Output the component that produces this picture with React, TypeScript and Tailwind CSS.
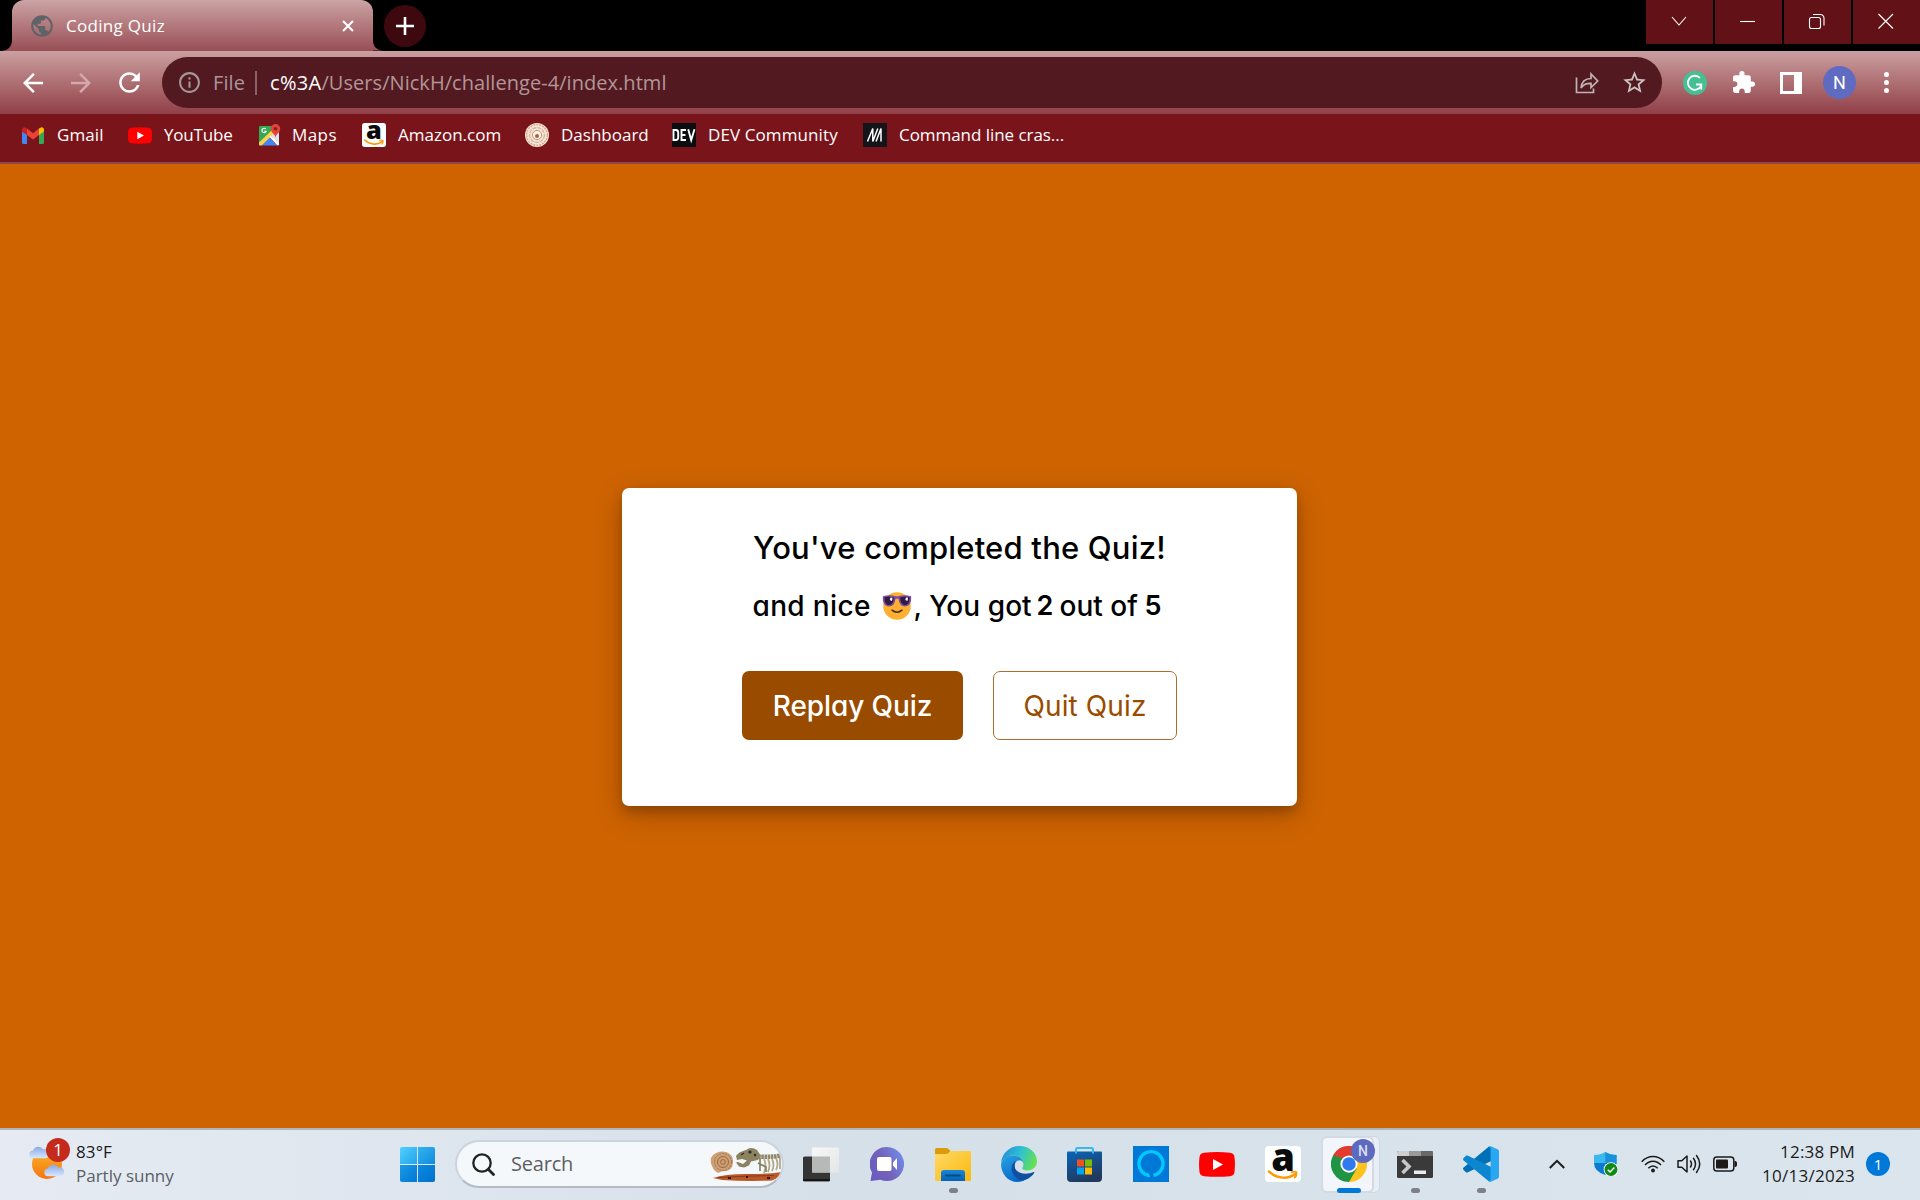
import type { ReactNode } from 'react';
import { MdArrowBack, MdArrowForward, MdExtension, MdInfoOutline, MdPublic, MdRefresh, MdStarBorder } from 'react-icons/md';

/* ---------- Brand icons ---------- */

function GmailIcon() {
  return (
    <svg viewBox="0 0 22 17" className="h-[17px] w-[22px]">
      <path d="M0 4v11.500Q0 17 1.500 17H5V7.500z" fill="#4285f4" />
      <path d="M22 4v11.500q0 1.500-1.500 1.500H17V7.500z" fill="#34a853" />
      <path d="M17 1.500V8l5-3.500V3c0-2.500-2.200-3.400-4-2z" fill="#fbbc04" />
      <path d="M5 1.500V8L0 4.500V3C0 .5 2.200-.4 4 1z" fill="#c5221f" />
      <path d="M5 1.600l6 4.600 6-4.600v6.300l-6 4.600-6-4.600z" fill="#ea4335" />
    </svg>
  );
}

function YouTubeIcon({ className }: { className: string }) {
  return (
    <svg viewBox="0 0 36 25" className={className}>
      <path d="M5 .8Q18-.7 31 .8q4 .4 4.500 4.200.9 7.500 0 15-.500 3.800-4.500 4.200-13 1.300-26 0Q1 23.800.5 20q-.9-7.500 0-15Q1 1.200 5 .8z" fill="#f00" />
      <path d="M14 7l10 5.500L14 18z" fill="#fff" />
    </svg>
  );
}

function MapsIcon() {
  return (
    <svg viewBox="0 0 22 22" className="size-[22px]">
      <path d="M0 3q0-1 1-1h13v8L0 21z" fill="#34a853" />
      <path d="M12 11l8-6v15q0 1-1 1h-1z" fill="#dfe3e8" />
      <path d="M1.500 21.500l8.500-8.500 8.500 8.500z" fill="#4285f4" />
      <path d="M0 18.500L13 6l2.500 3L2.500 21.500H1q-1 0-1-1z" fill="#fdd14b" />
      <path d="M11 12l8.500 9" stroke="#fff" strokeWidth="2" />
      <path d="M6.800 5A2.200 2.200 0 1 0 7.200 7.200H5.200" fill="none" stroke="#fff" strokeWidth="1.100" />
      <path d="M16.500 14c0-4-4.700-5-4.700-9.300a4.700 4.700 0 0 1 9.400 0C21.200 9 16.500 10 16.500 14z" fill="#e2443a" />
      <circle cx="16.500" cy="4.800" r="1.800" fill="#8c1d18" />
    </svg>
  );
}

function AmazonIcon({ className }: { className: string }) {
  return (
    <svg viewBox="0 0 36 36" className={className} overflow="visible">
      <rect width="36" height="36" rx="4" fill="#fff" />
      <text x="18" y="24.500" textAnchor="middle" fontSize="38" fontWeight="800" fontFamily="Open Sans, sans-serif" fill="#0b0b0b">a</text>
      <path d="M4 25.500c8 7.500 19 8 26 2.500" fill="none" stroke="#ff9900" strokeWidth="2.400" strokeLinecap="round" />
      <path d="M26.500 26.300c2-.9 4-.8 5 0 .2 2-.5 4-1.700 5.200" fill="none" stroke="#ff9900" strokeWidth="1.800" strokeLinecap="round" />
    </svg>
  );
}

function DashboardIcon() {
  return (
    <svg viewBox="0 0 24 24" className="size-6">
      <circle cx="12" cy="12" r="12" fill="#f3e4d6" />
      <circle cx="12" cy="12" r="10.400" fill="none" stroke="#d3a685" strokeWidth="1.300" strokeDasharray="2 1" />
      <circle cx="12" cy="12" r="7.400" fill="none" stroke="#d9b092" strokeWidth="1.200" strokeDasharray="4 1" />
      <circle cx="12" cy="12" r="4.600" fill="#fbf3ea" stroke="#c3946f" strokeWidth="1" />
      <circle cx="12" cy="13" r="2" fill="#a5643a" />
    </svg>
  );
}

function DevIcon() {
  return (
    <svg viewBox="0 0 24 24" className="size-6">
      <rect width="24" height="24" fill="#0c0d10" />
      <g fill="none" stroke="#fff" strokeWidth="1.900">
        <path d="M1.500 7v10h2.200q2.500 0 2.500-2.500v-5Q6.200 7 3.700 7z" />
        <path d="M14 7H9.500v10H14M9.500 12h4" />
        <path d="M16.200 6.200L19.200 17l3.300-10.800" />
      </g>
    </svg>
  );
}

function SlashMIcon() {
  return (
    <svg viewBox="0 0 24 24" className="size-6">
      <rect width="24" height="24" fill="#14141b" />
      <path d="M4.500 18.500L9.800 5.500v13L14.800 5.500M13 18.500L18 5.500v13" fill="none" stroke="#fff" strokeWidth="1.500" />
    </svg>
  );
}

/* ---------- Browser chrome ---------- */

const windowButtons: { name: string; drawing: ReactNode }[] = [
  { name: 'Search tabs', drawing: <path d="M4 7l7 8 7-8" /> },
  { name: 'Minimize', drawing: <path d="M3 11.500h15" /> },
  {
    name: 'Restore',
    drawing: (
      <>
        <rect x="3.500" y="7.500" width="11" height="11" rx="2" />
        <path d="M7 4.500h7.500a3.500 3.500 0 0 1 3.500 3.500v7.500" />
      </>
    ),
  },
  { name: 'Close', drawing: <path d="M3.500 4l14.500 14.500m0-14.500L3.500 18.500" /> },
];

function TitleBar() {
  return (
    <div className="flex h-[51px] items-start bg-black">
      <div className="flex h-[51px] w-[12px] items-end">
        <svg viewBox="0 0 12 12" className="size-3">
          <path d="M12 0v12H0Q12 12 12 0z" fill="#99525a" />
        </svg>
      </div>
      <div className="flex h-[51px] w-[361px] items-center rounded-t-[12px] bg-linear-to-b from-[#cba4a5] to-[#984e56] pl-[17px]">
        <MdPublic className="size-[26px] text-[#5f6368]" />
        <span className="ml-[11px] text-[17px] tracking-[0.3px] text-white">Coding Quiz</span>
        <svg viewBox="0 0 12 12" className="mr-[19px] ml-auto size-3">
          <path d="M1 1l10 10M11 1L1 11" stroke="#fff" strokeWidth="2.100" />
        </svg>
      </div>
      <div className="flex h-[51px] w-[11px] items-end">
        <svg viewBox="0 0 12 12" className="size-3">
          <path d="M0 0v12h12Q0 12 0 0z" fill="#99525a" />
        </svg>
      </div>
      <div className="mt-[5px] flex size-[42px] items-center justify-center rounded-full bg-[#3d080e]">
        <svg viewBox="0 0 18 18" className="size-[18px]">
          <path d="M9 0v18M0 9h18" stroke="#fff" strokeWidth="2.600" />
        </svg>
      </div>
      <div className="ml-auto flex gap-[2px]">
        {windowButtons.map((b) => (
          <button key={b.name} aria-label={b.name} className="flex h-11 w-[67px] items-center justify-center bg-[#621217] pb-px">
            <svg viewBox="0 0 23 23" className="size-[23px]" fill="none" stroke="#fff" strokeWidth="1.100">
              {b.drawing}
            </svg>
          </button>
        ))}
      </div>
    </div>
  );
}

function Toolbar() {
  return (
    <div className="flex h-[63px] items-center bg-linear-to-b from-[#caa0a1] to-[#903f48] text-white">
      <MdArrowBack className="ml-[18px] size-[30px]" />
      <MdArrowForward className="ml-[18px] size-[30px] text-[#d5a9ac]" />
      <MdRefresh className="ml-[18px] size-[31px]" />
      <div className="ml-[17px] flex h-[51px] w-[1500px] items-center rounded-full bg-[#521a20] pl-[15px] text-[20px] whitespace-nowrap">
        <MdInfoOutline className="size-[25px] text-[#a39799]" />
        <span className="ml-[11px] tracking-[0.1px] text-[#a8969a]">File</span>
        <span className="ml-[10px] h-6 w-[2px] bg-[#876268]" />
        <span className="ml-[13px] tracking-[0.3px]">c%3A</span>
        <span className="tracking-[0.05px] text-[#b39598]">/Users/NickH/challenge-4/index.html</span>
        <svg viewBox="0 0 24 22" className="mr-[22px] ml-auto h-[22px] w-6" fill="none" stroke="#bfb3b4" strokeWidth="1.700">
          <path d="M1.500 5.500v15h17v-4" />
          <path d="M6 16q1-9.500 10-9.500V2l6.700 7-6.700 6.500v-4.200Q9 11 6 16z" />
        </svg>
        <MdStarBorder className="mr-[14px] size-[27px] text-[#cbc1c2]" />
      </div>
      <div className="ml-[21px] flex size-6 items-center justify-center rounded-full bg-[#45c092]">
        <svg viewBox="0 0 24 24" className="size-6" fill="none" stroke="#fff" strokeWidth="1.800">
          <path d="M17 7A7 7 0 1 0 18.300 14.500" />
          <path d="M13 13.500h5.300V18.500" />
        </svg>
      </div>
      <MdExtension className="ml-[24px] size-[25px]" />
      <svg viewBox="0 0 22 22" className="ml-[24px] size-[22px]">
        <path d="M0 0h22v22H0zM3 3v16h11V3z" fill="#fff" fillRule="evenodd" />
      </svg>
      <span className="ml-[21px] flex size-[33px] items-center justify-center rounded-full bg-[#5f6bc1] font-['Roboto'] text-[18px]">N</span>
      <span className="ml-[28px] flex flex-col gap-[3px]">
        <i className="size-[5px] rounded-full bg-white" />
        <i className="size-[5px] rounded-full bg-white" />
        <i className="size-[5px] rounded-full bg-white" />
      </span>
    </div>
  );
}

function Bookmark({ icon, width, children }: { icon: ReactNode; width: string; children: ReactNode }) {
  return (
    <div className={`flex items-center ${width}`}>
      {icon}
      {children}
    </div>
  );
}

function BookmarksBar() {
  return (
    <div className="flex h-[50px] items-center border-b-2 border-[#8f454d] bg-[#7a141b] pb-[6px] pl-[22px] text-[17px] whitespace-nowrap text-white">
      <Bookmark width="w-[106px]" icon={<GmailIcon />}>
        <span className="ml-[13px] tracking-[0.1px]">Gmail</span>
      </Bookmark>
      <Bookmark width="w-[131px]" icon={<YouTubeIcon className="h-[17px] w-6" />}>
        <span className="ml-[12px] tracking-[-0.2px]">YouTube</span>
      </Bookmark>
      <Bookmark width="w-[103px]" icon={<MapsIcon />}>
        <span className="ml-[11px] tracking-[0.44px]">Maps</span>
      </Bookmark>
      <Bookmark width="w-[163px]" icon={<AmazonIcon className="size-6" />}>
        <span className="ml-[12px]">Amazon.com</span>
      </Bookmark>
      <Bookmark width="w-[147px]" icon={<DashboardIcon />}>
        <span className="ml-[12px]">Dashboard</span>
      </Bookmark>
      <Bookmark width="w-[191px]" icon={<DevIcon />}>
        <span className="ml-[12px] tracking-[0.1px]">DEV Community</span>
      </Bookmark>
      <Bookmark width="w-[220px]" icon={<SlashMIcon />}>
        <span className="ml-[12px] tracking-[-0.05px]">Command line cras...</span>
      </Bookmark>
    </div>
  );
}

/* ---------- Page ---------- */

function CoolFace() {
  return (
    <svg viewBox="0 0 30 28" className="h-[28px] w-[30px]">
      <circle cx="15" cy="14" r="13.800" fill="#ffb02e" />
      <path d="M10 18.200q5 4 10 0" fill="none" stroke="#402a32" strokeWidth="1.500" strokeLinecap="round" />
      <path d="M.8 4.300Q7 2.500 13 4q2 .6 4 0 6-1.500 12.200.3.600 10.200-6.200 10.200-5.500 0-6.500-7.500-1.500-.8-3 0-1 7.500-6.500 7.500Q.2 14.500.8 4.300z" fill="#7b4aa5" />
      <path d="M2.500 5.300q5-1 9.500.2-.5 7.500-5 7.500-4.800 0-4.500-7.700zM18 5.500q4.500-1.200 9.500-.2.300 7.700-4.500 7.700-4.500 0-5-7.500z" fill="#321b41" />
      <path d="M8.500 5.500l2 .3-.5 3.200-2.200-1zM24 5.500l2 .3-.5 3.200-2.200-1z" fill="#fff" />
    </svg>
  );
}

function ResultCard() {
  return (
    <div className="mt-[324px] mr-px flex h-[318px] w-[675px] flex-col items-center rounded-[7px] bg-white font-['Inter','Open_Sans',sans-serif] whitespace-nowrap shadow-[0_6px_12px_rgba(0,0,0,0.2),0_9px_30px_rgba(0,0,0,0.19)] [font-feature-settings:'cv11']">
      <h1 className="mt-[40px] text-[31px] leading-[40px] font-[450] tracking-[0.2px] text-black">You've completed the Quiz!</h1>
      <div className="mt-[18px] ml-[-3px] flex h-10 w-[411px] items-center text-[28px] leading-[40px] font-[450] text-black">
        <span className="w-[129px] tracking-[0.35px]">and nice</span>
        <CoolFace />
        <span className="ml-[2px] w-[123px] tracking-[0.05px]">, You got</span>
        <span className="w-[23px] text-[27px] font-semibold">2</span>
        <span className="w-[85px]">out of</span>
        <span className="text-[27px] font-semibold">5</span>
      </div>
      <div className="mt-[45px] flex gap-[30px] text-[28px]">
        <button className="h-[69px] w-[221px] rounded-[7px] bg-[#994b00] font-medium tracking-[-0.1px] text-white">Replay Quiz</button>
        <button className="h-[69px] w-[184px] rounded-[7px] border border-[#b06c2c] tracking-[0.1px] text-[#994b00]">Quit Quiz</button>
      </div>
    </div>
  );
}

/* ---------- Taskbar ---------- */

function Cloud({ className }: { className: string }) {
  return (
    <svg viewBox="0 0 22 14" className={className}>
      <path d="M4.500 13.500a4 4 0 0 1-.3-8A6 6 0 0 1 15 4.300a4.700 4.700 0 0 1 2.700 9.200z" fill="url(#cloud)" />
    </svg>
  );
}

function Weather() {
  return (
    <div className="flex w-[400px] items-center pl-[29px]">
      <svg width="0" height="0" className="absolute">
        <linearGradient id="cloud" x1="0" y1="0" x2="0" y2="1">
          <stop offset="0" stopColor="#89a9e4" />
          <stop offset="1" stopColor="#d8e6fb" />
        </linearGradient>
      </svg>
      <div className="relative size-[42px]">
        <span className="absolute top-[6px] left-[3px] size-[30px] rounded-full bg-linear-to-b from-[#f7b529] to-[#f6740f]" />
        <Cloud className="absolute top-[2px] left-0 h-[14px] w-[21px]" />
        <Cloud className="absolute top-[20px] left-[15px] h-[14px] w-[21px]" />
        <span className="absolute -top-[5px] left-[17px] flex size-6 items-center justify-center rounded-full bg-[#c42b1c] text-[17px] text-white">1</span>
      </div>
      <div className="ml-[5px] text-[17px] leading-6">
        <p className="tracking-[0.13px] text-[#1b1b1b]">83°F</p>
        <p className="text-[#5b5e63]">Partly sunny</p>
      </div>
    </div>
  );
}

function FossilArt() {
  return (
    <svg viewBox="0 0 72 34" className="h-[34px] w-[72px]">
      <path d="M3 31q12-4 33-4 18 .5 36-2-3 6-10 8.500-25 1-50-.5z" fill="#b9592a" />
      <path d="M8 30.500q25-1.500 56-2" stroke="#8a3c16" strokeWidth="1" fill="none" />
      <path d="M18 31h3M36 30h2M57 31h3" stroke="#3a1408" strokeWidth="2.200" />
      <path d="M4 23Q-2 13 3 8q6-5 13-3 8 3 7 11-1 8-8 8-4 0-7 2z" fill="#cd9f74" />
      <circle cx="13" cy="15" r="8.500" fill="none" stroke="#a57549" strokeWidth="1" strokeDasharray="2 1" />
      <circle cx="13" cy="15" r="5.500" fill="none" stroke="#9c6a40" strokeWidth="1" />
      <circle cx="13" cy="15" r="2.400" fill="none" stroke="#9c6a40" strokeWidth="1" />
      <path d="M26 9q2-4 10-6 5-4 11 0l4 6-3 4-7 1.500-2 4-5 2-5-1-3-4 2-.5 5 2 4-3.500-5-1.500-5 1z" fill="#8b8260" />
      <circle cx="40" cy="5" r="1.600" fill="#2f2b1d" />
      <circle cx="45" cy="8" r="1.200" fill="#2f2b1d" />
      <path d="M31 8l3-2" stroke="#3c3725" strokeWidth="1.500" />
      <path d="M48 9.500q12 1 23-1" stroke="#8f8768" strokeWidth="4.500" strokeDasharray="2.600 .6" fill="none" />
      <path d="M54 12q3 6 0 14M58 12q3 6 0 13M62 12q3 6 0 12M66 11q3 6 0 12M70 11v11" stroke="#b0a98c" strokeWidth="1.800" fill="none" />
      <path d="M50 11v13M48 16l8 4v5" stroke="#847c5a" strokeWidth="1.600" fill="none" />
    </svg>
  );
}

function TaskViewIcon() {
  return (
    <svg viewBox="0 0 36 35" className="h-[35px] w-9">
      <defs>
        <linearGradient id="tv" x1="0" y1="0" x2="1" y2="1">
          <stop offset="0" stopColor="#f8f8f8" />
          <stop offset="1" stopColor="#e4e5e6" />
        </linearGradient>
      </defs>
      <rect y="9.500" width="27" height="25" rx="1.500" fill="#353535" />
      <path d="M0 33h27" stroke="#0d0d0d" strokeWidth="1.500" />
      <rect x="9" y="0.500" width="27" height="25" rx="1" fill="url(#tv)" />
      <path d="M9 9.500h17.500a.5.500 0 0 1 .5.500v15.500H9z" fill="#b7b8b8" />
    </svg>
  );
}

function ChatIcon() {
  return (
    <svg viewBox="0 0 34 34" className="size-[34px]">
      <defs>
        <linearGradient id="chat" x1="0" y1="0.700" x2="1" y2="0.200">
          <stop offset="0" stopColor="#6a5cc0" />
          <stop offset="0.450" stopColor="#7463ba" />
          <stop offset="1" stopColor="#6f8fef" />
        </linearGradient>
      </defs>
      <path d="M17 0a17 17 0 1 1-6.500 32.700L.5 34 2 25.500A17 17 0 0 1 17 0z" fill="url(#chat)" />
      <rect x="7" y="10" width="14.500" height="14" rx="2" fill="#fff" />
      <path d="M23 15.500l4-4.500v12l-4-4.500z" fill="#fff" />
    </svg>
  );
}

function FolderIcon() {
  return (
    <svg viewBox="0 0 36 33" className="h-[33px] w-9">
      <defs>
        <linearGradient id="fold" x1="0" y1="0" x2="1" y2="1">
          <stop offset="0" stopColor="#ffd968" />
          <stop offset="1" stopColor="#fbb90c" />
        </linearGradient>
        <linearGradient id="foldTray" x1="0" y1="0" x2="0" y2="1">
          <stop offset="0" stopColor="#1a86d8" />
          <stop offset="1" stopColor="#0463b4" />
        </linearGradient>
      </defs>
      <path d="M0 1.500Q0 0 1.500 0H11q1.500 0 2.500 1l2 2-3 5H0z" fill="#dc9a08" />
      <path d="M0 6h11q1.500 0 2.500-1l1.500-1.500Q15.600 3 17 3h18q1 0 1 1v28q0 1-1 1H1q-1 0-1-1z" fill="url(#fold)" />
      <path d="M6 33v-8q0-3 3-3h18q3 0 3 3v8z" fill="url(#foldTray)" />
      <path d="M11 27.500h14" stroke="#064a86" strokeWidth="1.800" strokeLinecap="round" />
    </svg>
  );
}

function EdgeIcon() {
  return (
    <svg viewBox="0 0 36 36" className="size-9">
      <defs>
        <linearGradient id="edgeTop" x1="0" y1="0.300" x2="1" y2="0.600">
          <stop offset="0" stopColor="#1f8fd8" />
          <stop offset="0.500" stopColor="#30c2d2" />
          <stop offset="1" stopColor="#68e24a" />
        </linearGradient>
        <linearGradient id="edgeLeft" x1="0" y1="0" x2="0.500" y2="1">
          <stop offset="0" stopColor="#2aa4e2" />
          <stop offset="1" stopColor="#0668c8" />
        </linearGradient>
      </defs>
      <path d="M0 17C1 7 9 0 18.500 0 29 0 36 7.500 36 15c0 6-4.500 9.500-9.500 9.500-4 0-5.700-1.500-5.200-2.600.6-1 1.200-2 1-4C22 13 17 9 11 9.500 6 10 2 13 0 17z" fill="url(#edgeTop)" />
      <path d="M0 18c1.500-5.500 6-8.600 11.300-8.600 6.500 0 10.500 3.600 11 8-.5-2-2-3.200-4-3.200-3 .2-5 3-4.600 6.800C14.300 28 20 32 26 31.500c-2.500 3-6 4.500-9.500 4.500C7 36 0 28 0 18z" fill="url(#edgeLeft)" />
      <path d="M15 14.700C11 17 9.600 21.500 11.200 26c1.800 5 6.300 8.500 11 8.700C27 33.500 31.500 30 33.200 26.800c.3-.7-.2-1-.8-.7C25 29.700 13.500 27.500 13.600 19.300c0-2 .6-3.500 1.400-4.600z" fill="#0f50a0" />
    </svg>
  );
}

function StoreIcon() {
  return (
    <svg viewBox="0 0 35 35" className="mr-px size-[35px]">
      <defs>
        <linearGradient id="store" x1="0" y1="0" x2="0.400" y2="1">
          <stop offset="0" stopColor="#0a66b8" />
          <stop offset="1" stopColor="#21395f" />
        </linearGradient>
      </defs>
      <path d="M0 5.500q0-1 1-1h33q1 0 1 1V31q0 4-4 4H4q-4 0-4-4z" fill="url(#store)" />
      <path d="M9 6.500V2.500Q9 1 10.500 1h14Q26 1 26 2.500v4" fill="none" stroke="#35b8ee" strokeWidth="2" />
      <path d="M10 12.500h7v7h-7z" fill="#f25022" />
      <path d="M18 12.500h7v7h-7z" fill="#7fba00" />
      <path d="M10 20.500h7v7h-7z" fill="#00a4ef" />
      <path d="M18 20.500h7v7h-7z" fill="#ffb900" />
    </svg>
  );
}

function AlexaIcon() {
  return (
    <svg viewBox="0 0 36 36" className="size-9">
      <rect width="36" height="36" fill="#0078d7" />
      <path d="M15.500 29.400A12 12 0 1 1 20.500 29.400" fill="none" stroke="#00caff" strokeWidth="3.400" />
      <path d="M14 26.500q3 1.500 3.300 4.500-1.600.2-3.600-.6z" fill="#00caff" />
    </svg>
  );
}

function ChromeIcon() {
  return (
    <svg viewBox="0 0 48 48" className="size-9">
      <path d="M24 24L3.200 12A24 24 0 0 1 44.800 12z" fill="#e33b2e" />
      <path d="M24 24L44.800 12A24 24 0 0 1 24 48z" fill="#fcc31e" />
      <path d="M24 24l10.400 6L24 48A24 24 0 0 1 3.200 12z" fill="#1f9445" />
      <path d="M24 13h20.800L34.400 30z" fill="#fcc31e" />
      <path d="M3.200 12l10.400 18L24 24V13z" fill="#1f9445" />
      <path d="M3.200 12A24 24 0 0 1 44.800 12L44.800 13H24L13.500 18.500 8 20z" fill="#e33b2e" />
      <path d="M3.200 12L13.600 30 17 17z" fill="#1f9445" />
      <circle cx="24" cy="24" r="11.500" fill="#fff" />
      <circle cx="24" cy="24" r="9" fill="#3079ee" />
    </svg>
  );
}

function TerminalIcon() {
  return (
    <svg viewBox="0 0 36 27" className="h-[27px] w-9">
      <rect width="36" height="27" rx="1.500" fill="#3a3a3a" />
      <path d="M0 5V1.500Q0 0 1.500 0H12v5z" fill="#cfcfcf" />
      <path d="M12 0h12v5H12z" fill="#9a9a9a" />
      <path d="M24 0h10.500Q36 0 36 1.500V5H24z" fill="#686868" />
      <path d="M5.500 9l6.500 6.500L5.500 22" fill="none" stroke="#c9c9c9" strokeWidth="3.600" />
      <rect x="17" y="19.500" width="12" height="3.500" fill="#ececec" />
    </svg>
  );
}

function VsCodeIcon() {
  return (
    <svg viewBox="0 0 36 36" className="size-9">
      <path d="M26 .5L34.500 4v8L5 26.300q-1 .7-2 0L.6 24q-1.200-1.200 0-2.400z" fill="#0070b8" />
      <path d="M26 35.500l8.500-3.500v-8L5 9.700q-1-.7-2 0L.6 12q-1.200 1.200 0 2.400z" fill="#0c87cf" />
      <path d="M26 35.700q1.600-.6 1.600-3V3.300q0-2.300-1.600-3l.8-.1q.5-.2 1 0L35 3.600q1 .6 1 1.800v25.200q0 1.200-1 1.800l-7.200 3.400q-.9.200-1.800-.1z" fill="#2aa7f2" />
    </svg>
  );
}

function Slot({ children, running }: { children: ReactNode; running?: boolean }) {
  return (
    <div className="relative flex h-full w-[66px] items-center justify-center">
      {children}
      {running && <span className="absolute bottom-[7px] h-[5px] w-[9px] rounded-full bg-[#7d8186]" />}
    </div>
  );
}

function Taskbar() {
  return (
    <div className="flex h-[72px] items-center bg-linear-to-r from-[#e6ebf3] via-[#d6e0e9] via-45% to-[#dbe5ed] shadow-[inset_0_2px_0_#aeb5bc]">
      <Weather />
      <div className="mt-px grid size-[35px] grid-cols-2 gap-px">
        <i className="rounded-tl-[2px] bg-linear-to-br from-[#4fd0fd] to-[#22a4ea]" />
        <i className="rounded-tr-[2px] bg-linear-to-br from-[#34b4f0] to-[#0f8ade]" />
        <i className="rounded-bl-[2px] bg-linear-to-br from-[#1b99e6] to-[#0078d4]" />
        <i className="rounded-br-[2px] bg-linear-to-br from-[#0f8ade] to-[#0070d0]" />
      </div>
      <div className="ml-[20px] flex h-[48px] w-[329px] items-center overflow-hidden rounded-full border-2 border-[#cbd4de] border-b-[#b3bcc6] bg-[#f5f8fb] pl-[15px]">
        <svg viewBox="0 0 23 23" className="size-[23px]" fill="none" stroke="#222" strokeLinecap="round">
          <circle cx="10" cy="10" r="8.700" strokeWidth="2.300" />
          <path d="M16.500 16.500l5 5" strokeWidth="2.800" />
        </svg>
        <span className="ml-[16px] text-[20px] tracking-[-0.2px] text-[#5d5f62]">Search</span>
        <span className="ml-auto">
          <FossilArt />
        </span>
      </div>
      <div className="ml-[4px] flex h-full">
        <Slot><TaskViewIcon /></Slot>
        <Slot><ChatIcon /></Slot>
        <Slot running><FolderIcon /></Slot>
        <Slot><EdgeIcon /></Slot>
        <Slot><StoreIcon /></Slot>
        <Slot><AlexaIcon /></Slot>
        <Slot><YouTubeIcon className="h-[25px] w-9" /></Slot>
        <Slot><AmazonIcon className="size-9" /></Slot>
        <div className="relative flex h-full w-[66px] items-center justify-center">
          <span className="absolute top-[8px] left-[7px] h-[57px] w-[57px] rounded-[6px] border border-[#cfd7e2] bg-[#e9edf4]" />
          <span className="absolute top-[8px] left-[5px] h-[57px] w-[53px] rounded-[6px] border-2 border-[#d3dae5] bg-[#f2f5f9]" />
          <span className="relative -ml-[1px]"><ChromeIcon /></span>
          <span className="absolute top-[11px] left-[35px] flex size-6 items-center justify-center rounded-full bg-[#5c6abf] font-['Roboto'] text-[14px] font-medium text-[#d9dcf2]">N</span>
          <span className="absolute bottom-[7px] left-[21px] h-[5px] w-6 rounded-full bg-[#0078d7]" />
        </div>
        <Slot running><TerminalIcon /></Slot>
        <Slot running><VsCodeIcon /></Slot>
      </div>
      <svg viewBox="0 0 16 10" className="ml-[35px] h-[10px] w-4" fill="none" stroke="#1b1b1b" strokeWidth="2">
        <path d="M.8 9L8 1.800 15.200 9" />
      </svg>
      <svg viewBox="0 0 24 24" className="ml-[29px] size-6">
        <path d="M11.300 0Q16 3 22.600 3v8H0V3q6.600 0 11.300-3z" fill="#39b9ee" />
        <path d="M11.300 0Q16 3 22.600 3v8H11.300z" fill="#1a8fdc" />
        <path d="M0 11h11.300v12Q0 19.500 0 11z" fill="#0b7bd2" />
        <path d="M11.300 11h11.300q0 8.500-11.300 12z" fill="#0a5cab" />
        <circle cx="17" cy="17.500" r="7.300" fill="#fff" />
        <circle cx="17" cy="17.500" r="6.500" fill="#0f8a16" />
        <path d="M13.700 17.700l2.400 2.300 4.300-4.400" fill="none" stroke="#fff" strokeWidth="1.400" />
      </svg>
      <svg viewBox="0 0 24 18" className="ml-[23px] h-[18px] w-6" fill="none" stroke="#1b1b1b" strokeWidth="1.500">
        <path d="M.7 6.800Q5.500 1.500 12 1.500t11.300 5.300M4 10q3.500-3.800 8-3.800t8 3.800M7.300 13.300Q9.500 11 12 11t4.700 2.300" />
        <circle cx="12" cy="15.500" r="1.900" fill="#1b1b1b" stroke="none" />
      </svg>
      <svg viewBox="0 0 24 20" className="ml-[12px] h-5 w-6" fill="none" stroke="#1b1b1b" strokeWidth="1.500" strokeLinejoin="round" strokeLinecap="round">
        <path d="M1 6.800h3.800L10 2v16l-5.200-4.800H1z" />
        <path d="M13.500 7q2 3 0 6M16.500 4.300q4 5.700 0 11.400M19.500 1.500q6.500 8.500 0 17" />
      </svg>
      <svg viewBox="0 0 24 16" className="ml-[12px] h-4 w-6">
        <rect x=".8" y="1" width="20" height="14" rx="3" fill="none" stroke="#1b1b1b" strokeWidth="1.500" />
        <rect x="3" y="3.500" width="12" height="9" rx="1" fill="#1b1b1b" />
        <path d="M21.500 5h1Q24 5.500 24 7v2q0 1.500-1.500 2h-1z" fill="#1b1b1b" />
      </svg>
      <div className="w-[118px] text-right text-[17px] leading-6 text-[#1b1b1b]">
        <p className="tracking-[0.2px]">12:38 PM</p>
        <p className="tracking-[0.28px]">10/13/2023</p>
      </div>
      <span className="ml-[11px] flex size-6 items-center justify-center rounded-full bg-[#0078d7] text-[15px] text-white">1</span>
    </div>
  );
}

export default function App() {
  return (
    <div className="flex h-[1200px] w-[1920px] flex-col overflow-hidden font-['Open_Sans','Noto_Sans',sans-serif]">
      <TitleBar />
      <Toolbar />
      <BookmarksBar />
      <main className="flex flex-1 justify-center bg-[#ce6300]">
        <ResultCard />
      </main>
      <Taskbar />
    </div>
  );
}
